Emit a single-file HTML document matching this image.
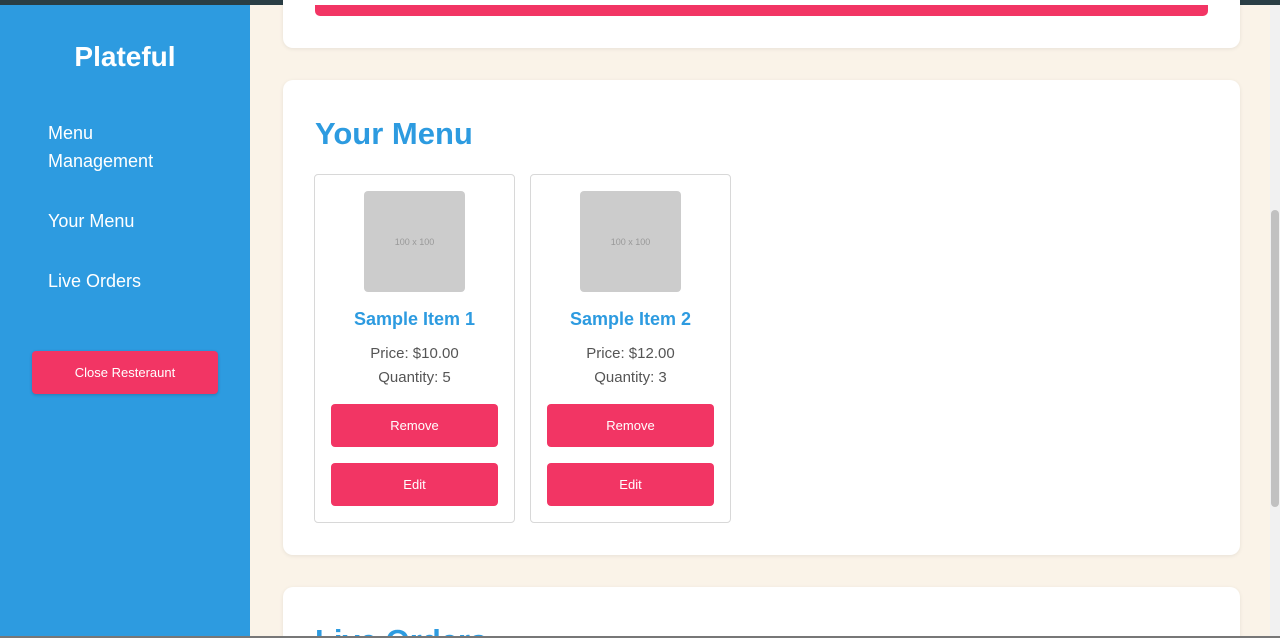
<!DOCTYPE html><html><head><style>
*{box-sizing:border-box;margin:0;padding:0}
html,body{width:1280px;height:638px;overflow:hidden}
body{background:#faf3e8;font-family:"Liberation Sans",sans-serif}
#w{position:relative;width:1280px;height:638px;overflow:hidden}
.a{position:absolute}
.side{left:0;top:5px;width:250px;height:633px;background:#2d9be0}
.card{background:#fff;border-radius:10px;box-shadow:0 1px 4px rgba(0,0,0,.08)}
.btn{background:#f23564;color:#fff;border-radius:4px;font-size:13px;display:flex;align-items:center;justify-content:center}
.item{width:201px;height:349px;top:174px;border:1px solid #d8d8d8;border-radius:4px;background:#fff}
.img{left:49px;top:16px;width:101px;height:101px;background:#ccc;border-radius:4px;color:#999;font-size:9px;display:flex;align-items:center;justify-content:center}
.t{left:0;width:100%;text-align:center}
</style></head><body><div id="w">
<div class="a" style="left:0;top:0;width:1280px;height:5px;background:#2a3e45"></div>
<div class="a side">
<div class="a" style="left:0;width:250px;top:36px;text-align:center;color:#fff;font-weight:bold;font-size:28px">Plateful</div>
<div class="a" style="left:48px;top:114px;color:#fff;font-size:18px;line-height:28px">Menu<br>Management</div>
<div class="a" style="left:48px;top:202px;color:#fff;font-size:18px;line-height:28px">Your Menu</div>
<div class="a" style="left:48px;top:262px;color:#fff;font-size:18px;line-height:28px">Live Orders</div>
<div class="a btn" style="left:32px;top:346px;width:186px;height:43px;box-shadow:0 1px 3px rgba(0,0,0,.2)">Close Resteraunt</div>
</div>
<div class="a card" style="left:283px;top:-20px;width:957px;height:68px"></div>
<div class="a" style="left:315px;top:5px;width:893px;height:11px;background:#f23564;border-radius:0 0 5px 5px"></div>
<div class="a card" style="left:283px;top:80px;width:957px;height:475px"></div>
<div class="a" style="left:315px;top:116px;color:#2d9be0;font-weight:bold;font-size:31px">Your Menu</div>
<div class="a item" style="left:314px">
<div class="a img">100 x 100</div>
<div class="a t" style="top:134px;color:#2d9be0;font-weight:bold;font-size:18px">Sample Item 1</div>
<div class="a t" style="top:167px;color:#555;font-size:15px;line-height:24px">Price: $10.00<br>Quantity: 5</div>
<div class="a btn" style="left:16px;top:229px;width:167px;height:43px">Remove</div>
<div class="a btn" style="left:16px;top:288px;width:167px;height:43px">Edit</div>
</div>
<div class="a item" style="left:530px">
<div class="a img">100 x 100</div>
<div class="a t" style="top:134px;color:#2d9be0;font-weight:bold;font-size:18px">Sample Item 2</div>
<div class="a t" style="top:167px;color:#555;font-size:15px;line-height:24px">Price: $12.00<br>Quantity: 3</div>
<div class="a btn" style="left:16px;top:229px;width:167px;height:43px">Remove</div>
<div class="a btn" style="left:16px;top:288px;width:167px;height:43px">Edit</div>
</div>
<div class="a card" style="left:283px;top:587px;width:957px;height:80px;overflow:hidden"><div class="a" style="left:32px;top:36px;color:#2d9be0;font-weight:bold;font-size:31px">Live Orders</div></div>
<div class="a" style="left:1270px;top:5px;width:10px;height:633px;background:#f1f1f1"></div>
<div class="a" style="left:1271px;top:210px;width:8px;height:297px;background:#c1c1c1;border-radius:4px"></div>
<div class="a" style="left:0;top:636px;width:1280px;height:2px;background:#777"></div>
</div></body></html>
